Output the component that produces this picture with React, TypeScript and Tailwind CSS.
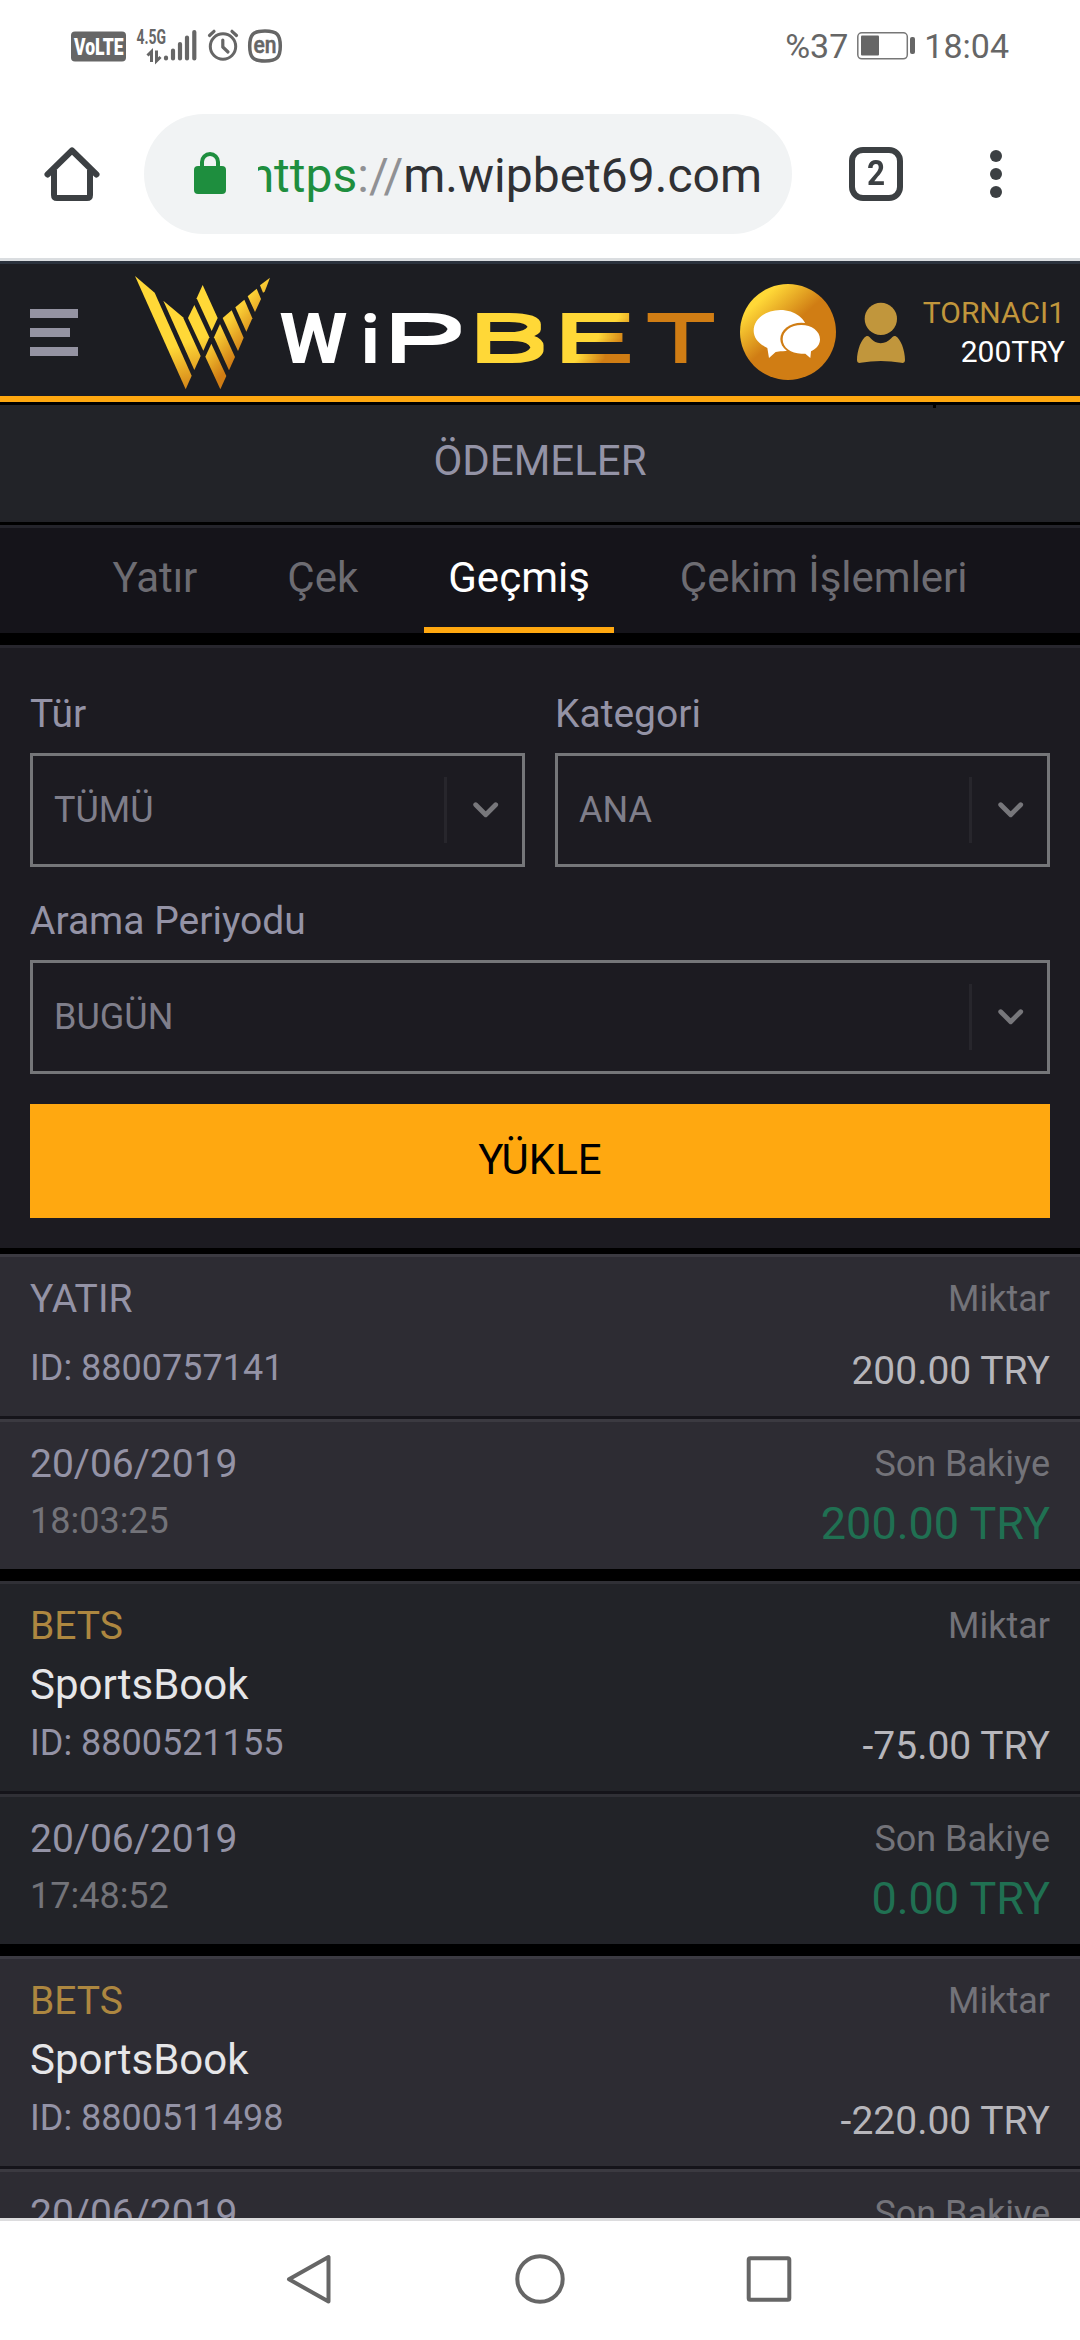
import React from "react";

const ROBOTO = "font-['Roboto',sans-serif]";

function StatusBar() {
  return (
    <div className="flex h-[93px] shrink-0 items-start bg-white text-[#666666]">
      <svg className="ml-[68px] mt-[24px] shrink-0" width="220" height="44" viewBox="68 24 220 44" fill="none">
        <rect x="71" y="31.500" width="55" height="30" rx="4" fill="#666" />
        <text x="74" y="54.500" fontSize="24" fontWeight="900" fill="#fff" textLength="49.500" lengthAdjust="spacingAndGlyphs" fontFamily="Roboto, sans-serif">VoLTE</text>
        <text x="136.500" y="44" fontSize="20" fontWeight="700" fill="#666" textLength="29.500" lengthAdjust="spacingAndGlyphs" fontFamily="Roboto, sans-serif">4.5G</text>
        <path d="M147.500 55.500l4-4v10.500M156.500 50.500v10.500l4-4" stroke="#666" strokeWidth="3" />
        <g stroke="#666" strokeWidth="4.200" strokeLinecap="round">
          <path d="M166 57.500v1M173 50.500v8M180 44v14.500M187 37.500v21M194.300 32v26.500" />
        </g>
        <circle cx="223" cy="46.500" r="12.700" stroke="#666" strokeWidth="3" />
        <path d="M222.800 40v7l5.200 5" stroke="#666" strokeWidth="3.200" strokeLinecap="round" strokeLinejoin="round" />
        <path d="M209.500 35.500l4.500-4.200M236.500 35.500l-4.500-4.200" stroke="#666" strokeWidth="3.200" strokeLinecap="round" />
        <path d="M265 31c12 0 15.300 3.500 15.300 15s-3.300 15-15.300 15-15.300-3.500-15.300-15 3.300-15 15.300-15z" stroke="#666" strokeWidth="3.500" />
        <text x="265" y="52.500" fontSize="23" fontWeight="500" fill="#666" stroke="#666" strokeWidth="0.500" textAnchor="middle" textLength="23" lengthAdjust="spacingAndGlyphs" fontFamily="Roboto, sans-serif">en</text>
      </svg>
      <div className="ml-auto mr-[71px] mt-[26px] flex text-[34px] leading-[40px]">
        <span>%37</span>
        <svg className="mx-[8px] mt-[4px]" width="60" height="32" viewBox="857 30 60 32">
          <rect x="858.800" y="32.800" width="49.500" height="26" rx="4" fill="none" stroke="#777" strokeWidth="1.500" />
          <rect x="862" y="35.500" width="18" height="20" rx="1" fill="#666" />
          <rect x="911" y="37" width="5" height="17" rx="2" fill="#666" />
        </svg>
        <span>18:04</span>
      </div>
    </div>
  );
}

function BrowserBar() {
  return (
    <div className="flex h-[168px] shrink-0 items-start border-b-[3px] border-[#dadde0] bg-white pt-[21px]">
      <svg className="ml-[42px] mt-[30px]" width="60" height="60" viewBox="42 144 60 60" fill="none" stroke="#3c4043" strokeWidth="6">
        <path d="M47.500 174.500L72 150.500l24.500 24" strokeLinecap="round" strokeLinejoin="round" />
        <path d="M54 170v25q0 3 3 3h30q3 0 3-3v-25" />
      </svg>
      <div className="ml-[42px] flex h-[120px] w-[648px] items-start rounded-full bg-[#f1f3f4] pl-[48px] pr-[30px]">
        <svg className="mt-[36px] shrink-0" width="36" height="48" viewBox="192 150 36 48">
          <rect x="194" y="166" width="32" height="28" rx="4" fill="#1e8e3e" />
          <path d="M202 168v-6a8 8 0 0 1 16 0v6" fill="none" stroke="#1e8e3e" strokeWidth="4" />
        </svg>
        <div className="ml-[30px] mt-[34px] flex min-w-0 flex-1 justify-end overflow-hidden whitespace-nowrap text-[48px] leading-[56px]">
          <span className="text-[#1e8e3e]">https</span>
          <span className="text-[#909194]">://</span>
          <span className="text-[#303134]">m.wipbet69.com</span>
        </div>
      </div>
      <div className="ml-[57px] mt-[33px] flex h-[54px] w-[54px] items-center justify-center rounded-[14px] border-[6px] border-[#3c4043] text-[#3c4043]">
        <span className="scale-x-90 text-[35px] font-bold leading-[42px]">2</span>
      </div>
      <div className="ml-[87px] mt-[36px] flex flex-col gap-[6px]">
        <i className="block h-3 w-3 rounded-full bg-[#3c4043]" />
        <i className="block h-3 w-3 rounded-full bg-[#3c4043]" />
        <i className="block h-3 w-3 rounded-full bg-[#3c4043]" />
      </div>
    </div>
  );
}

function Logo() {
  return (
    <svg className="ml-[57px] shrink-0" width="590" height="126" viewBox="405 54 1770 378" fontFamily="Roboto, sans-serif">
      <defs>
        <linearGradient id="wingLeft" gradientUnits="userSpaceOnUse" x1="520" y1="290" x2="565" y2="430">
          <stop offset="0" stopColor="#ffd837" />
          <stop offset="1" stopColor="#cf7c15" />
        </linearGradient>
        <linearGradient id="wingRight" gradientUnits="userSpaceOnUse" x1="700" y1="195" x2="770" y2="257">
          <stop offset="0" stopColor="#fbd036" />
          <stop offset="1" stopColor="#d07d14" />
        </linearGradient>
        <linearGradient id="letterE" gradientUnits="userSpaceOnUse" x1="1790" y1="262" x2="1832" y2="304">
          <stop offset="0" stopColor="#ffd837" />
          <stop offset="1" stopColor="#d07d14" />
        </linearGradient>
        <filter id="thickBars" filterUnits="userSpaceOnUse" x="1140" y="150" width="1030" height="230" colorInterpolationFilters="sRGB">
          <feMorphology operator="dilate" radius="0.01 6" />
        </filter>
      </defs>
      <g fill="url(#wingLeft)">
        <path d="M405 78L464 128 575 377 557 418z" />
        <path d="M490 152L549 202 602 318 583 360z" />
        <path d="M583 165L564 204 610 302 628 262z" />
        <path d="M608 105L590 145 635 243 653 204z" />
      </g>
      <g fill="url(#wingRight)">
        <path d="M634 281L616 320 661 418 679 378z" />
        <path d="M660 222L642 262 687 361 705 321z" />
        <path d="M695 181L668 204 714 303 731 263z" />
        <path d="M733 149L706 172 739 245 757 205z" />
        <path d="M770 116L743 139 765 186 783 147z" />
        <path d="M810 83L780 106 789 128 794 125z" />
      </g>
      <g fontSize="211" fontWeight="700" fill="#ffffff">
        <text x="838" y="339" textLength="205" lengthAdjust="spacingAndGlyphs">W</text>
        <text x="1082" y="339" fontSize="200" textLength="57" lengthAdjust="spacingAndGlyphs">i</text>
      </g>
      <g fontSize="194" fontWeight="400" fill="#ffffff" filter="url(#thickBars)">
        <text x="1143" y="333" textLength="254" lengthAdjust="spacingAndGlyphs">P</text>
        <text x="1398" y="333" textLength="256" lengthAdjust="spacingAndGlyphs" fill="#ffd837">B</text>
        <text x="1650" y="333" textLength="255" lengthAdjust="spacingAndGlyphs" fill="url(#letterE)">E</text>
        <text x="1934" y="333" textLength="216" lengthAdjust="spacingAndGlyphs" fill="#d07d14">T</text>
      </g>
    </svg>
  );
}

function SiteHeader() {
  return (
    <header className="flex h-[141px] shrink-0 items-start border-b-[6px] border-t-[3px] border-b-[#ffa810] border-t-[#2b323d] bg-[#1c1d22]">
      <div className="ml-[30px] mt-[45px] flex w-[48px] flex-col gap-[10px]">
        <i className="block h-[9px] w-[48px] bg-[#9493a2]" />
        <i className="block h-[9px] w-[40px] bg-[#9493a2]" />
        <i className="block h-[9px] w-[48px] bg-[#9493a2]" />
      </div>
      <div className="mt-[4px]"><Logo /></div>
      <svg className="ml-[15px] mt-[20px] shrink-0" width="96" height="96" viewBox="90 102 288 288">
        <defs>
          <linearGradient id="chatDisc" gradientUnits="userSpaceOnUse" x1="145" y1="155" x2="225" y2="245">
            <stop offset="0" stopColor="#ffd837" />
            <stop offset="1" stopColor="#d07d14" />
          </linearGradient>
        </defs>
        <circle cx="234" cy="246" r="144" fill="url(#chatDisc)" />
        <path d="M211 180c44 0 80 27 80 62s-36 62-80 62l-14 2-20 18-5-30c-25-12-41-30-41-52 0-35 36-62 80-62z" fill="#fff" />
        <ellipse cx="274" cy="267" rx="63" ry="49" fill="#d07d14" />
        <path d="M274 225c31 0 56 18 56 43 0 16-10 28-27 36l-2 20-15-13h-12c-31 0-56-18-56-43s25-43 56-43z" fill="#fff" />
      </svg>
      <svg className="ml-[21px] mt-[38px] shrink-0" width="48" height="62" viewBox="441 156 144 186" fill="#c1963c">
        <circle cx="512.500" cy="206.500" r="48.500" />
        <path d="M470 258C481 255 484 278 512 279.500C541 278 545 255 556 258C572 265 585 302 585 330Q585 340 574 338.500Q512 328 452 338.500Q441 340 441 330C441 302 454 265 470 258z" />
      </svg>
      <div className="ml-auto mr-[15px] mt-[31px] flex flex-col items-end gap-1 text-[30px] leading-[35px]">
        <span className="text-[#c1963c]">TORNACI1</span>
        <span className="text-white">200TRY</span>
      </div>
    </header>
  );
}

const tabs = ["Yatır", "Çek", "Geçmiş", "Çekim İşlemleri"];

function Select({ label, value }: { label: string; value: string }) {
  return (
    <div className="flex flex-1 flex-col gap-4">
      <label className="text-[39px] leading-[46px] text-[#9493a6]">{label}</label>
      <div className="flex h-[114px] items-center border-[3px] border-[#757679] pl-[21px]">
        <span className="flex-1 text-[36px] leading-[42px] text-[#7f7e8a]">{value}</span>
        <i className="block h-[66px] w-[3px] bg-[#27262c]" />
        <svg className="ml-[25px] mr-[23px]" width="27" height="18" viewBox="0 0 27 18" fill="none" stroke="#77777b" strokeWidth="4.800" strokeLinecap="round" strokeLinejoin="round">
          <path d="M3.700 3.700l10 10 10-10" />
        </svg>
      </div>
    </div>
  );
}

type Entry = { kind: string; product?: string; id: string; amount: string; time?: string; balance?: string };

const entries: Entry[] = [
  { kind: "YATIR", id: "8800757141", amount: "200.00", time: "18:03:25", balance: "200.00" },
  { kind: "BETS", product: "SportsBook", id: "8800521155", amount: "-75.00", time: "17:48:52", balance: "0.00" },
  { kind: "BETS", product: "SportsBook", id: "8800511498", amount: "-220.00" },
];

function EntryCard({ entry, odd }: { entry: Entry; odd: boolean }) {
  const bg = odd ? "bg-[#222328] border-t-[#303036]" : "bg-[#2d2c33] border-t-[#3b3a41]";
  return (
    <article className="shrink-0">
      <div className={`flex justify-between border-b-[3px] border-t-[3px] border-b-[#15141a] px-[30px] ${bg}`}>
        <div className="pb-[27px] pt-[19px]">
          <div className={`text-[39px] leading-[46px] ${entry.product ? "text-[#ad8740]" : "text-[#9493a6]"}`}>{entry.kind}</div>
          {entry.product && <div className="mt-[11px] text-[42px] leading-[49px] text-[#e6e6e8]">{entry.product}</div>}
          <div className={`text-[36px] leading-[42px] text-[#9493a6] ${entry.product ? "mt-[13px]" : "mt-[25px]"}`}>ID: {entry.id}</div>
        </div>
        <div className="flex flex-col items-end justify-between pb-[22px] pt-[21px]">
          <div className="text-[36px] leading-[42px] text-[#737379]">Miktar</div>
          <div className="text-[39px] leading-[46px] text-[#b7b6bb]">{entry.amount} TRY</div>
        </div>
      </div>
      <div className={`flex justify-between border-t-[3px] px-[30px] ${bg}`}>
        <div className="pb-[27px] pt-[19px]">
          <div className="text-[39px] leading-[46px] text-[#9493a6]">20/06/2019</div>
          {entry.time && <div className="mt-[13px] text-[36px] leading-[42px] text-[#737379]">{entry.time}</div>}
        </div>
        <div className="flex flex-col items-end pb-[19px] pt-[21px]">
          <div className="text-[36px] leading-[42px] text-[#737379]">Son Bakiye</div>
          {entry.balance && <div className="mt-3 text-[45px] leading-[53px] text-[#207052]">{entry.balance} TRY</div>}
        </div>
      </div>
    </article>
  );
}

function NavBar() {
  return (
    <nav className="flex h-[122px] shrink-0 items-start border-t-[3px] border-[#dcdcde] bg-white pt-[28px]">
      <svg className="ml-[279px]" width="60" height="60" viewBox="279 2249 60 60" fill="none" stroke="#666" strokeWidth="4" strokeLinejoin="round">
        <path d="M328.500 2257v44.500L289 2279.300z" />
      </svg>
      <svg className="ml-[171px]" width="60" height="60" viewBox="510 2249 60 60" fill="none" stroke="#666" strokeWidth="4">
        <circle cx="540" cy="2279" r="22.700" />
      </svg>
      <svg className="ml-[169px]" width="60" height="60" viewBox="739 2249 60 60" fill="none" stroke="#666" strokeWidth="4">
        <rect x="748.700" y="2258.300" width="40.600" height="41.500" rx="1.500" />
      </svg>
    </nav>
  );
}

export default function App() {
  return (
    <div className={`flex h-[2340px] w-[1080px] flex-col overflow-hidden bg-black ${ROBOTO}`}>
      <StatusBar />
      <BrowserBar />
      <main className="flex min-h-0 flex-1 flex-col overflow-hidden">
        <SiteHeader />
        <div className="relative mt-[3px] flex h-[117px] shrink-0 items-center justify-center bg-[#222328] pb-[6px]">
          <i className="absolute left-[933px] top-0 h-[3px] w-[3px] bg-black" />
          <h1 className="text-[42px] leading-[49px] text-[#9493a6]">ÖDEMELER</h1>
        </div>
        <div className="mt-[3px] flex h-[108px] shrink-0 justify-center gap-[42px] border-t-[3px] border-[#24242b] bg-[#15141a] text-[42px] leading-[49px]">
          {tabs.map((tab) => (
            <div
              key={tab}
              className={`border-b-[6px] px-6 pt-[25px] ${tab === "Geçmiş" ? "border-[#ffa810] text-white" : "border-transparent text-[#6d6c72]"}`}
            >
              {tab}
            </div>
          ))}
        </div>
        <section className="mt-3 flex shrink-0 flex-col border-t-[3px] border-[#27262d] bg-[#1c1b21] px-[30px] pb-[30px] pt-[43px]">
          <div className="flex gap-[30px]">
            <Select label="Tür" value="TÜMÜ" />
            <Select label="Kategori" value="ANA" />
          </div>
          <div className="mt-[31px] flex">
            <Select label="Arama Periyodu" value="BUGÜN" />
          </div>
          <button className="mt-[30px] h-[114px] bg-[#ffa810] pb-[3px] text-[42px] leading-[49px] text-black">YÜKLE</button>
        </section>
        <section className="mt-[6px] flex flex-col gap-3">
          {entries.map((entry, i) => (
            <EntryCard key={entry.id} entry={entry} odd={i % 2 === 1} />
          ))}
        </section>
      </main>
      <NavBar />
    </div>
  );
}
